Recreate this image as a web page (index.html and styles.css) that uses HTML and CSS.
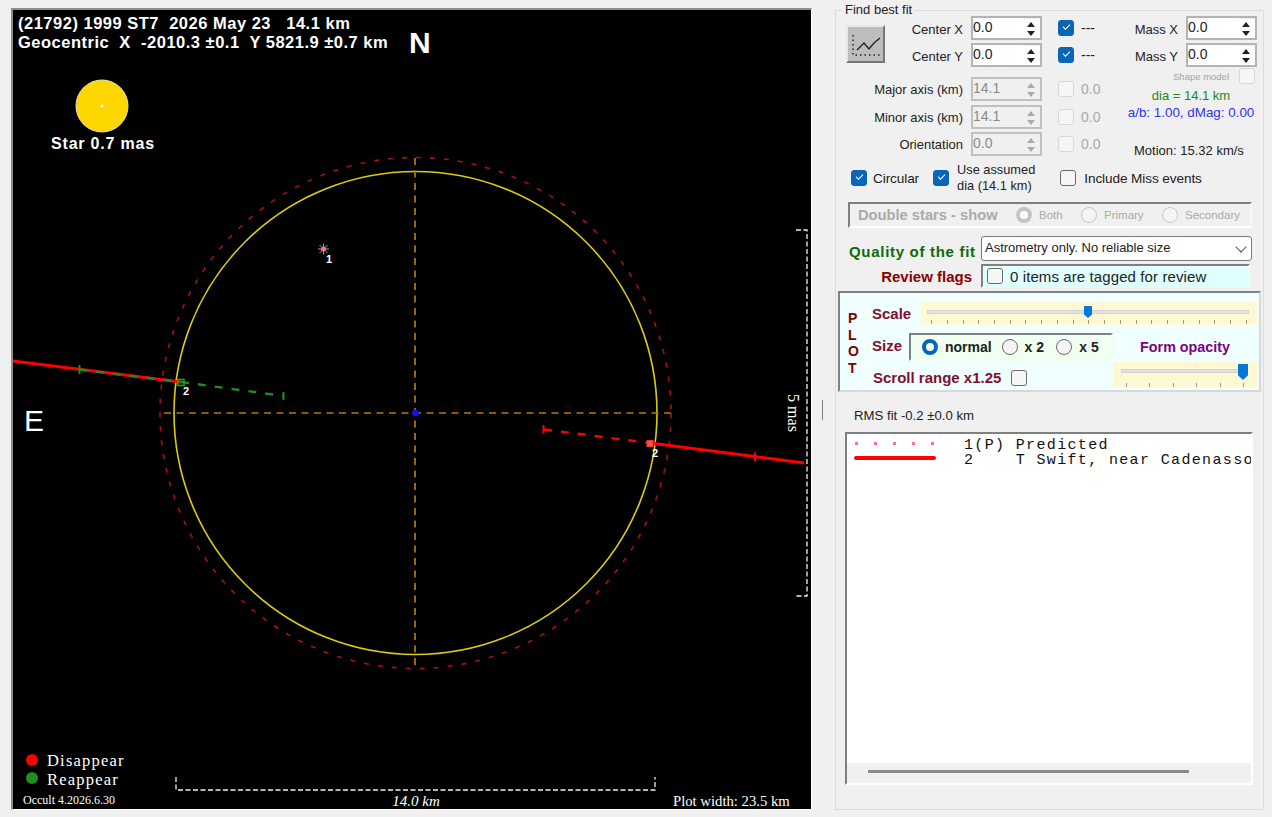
FILE: index.html
```html
<!DOCTYPE html>
<html lang="en">
<head>
    <meta charset="UTF-8">
    <meta name="viewport" content="width=device-width, initial-scale=1.0">
    <title>Asteroid shape fit</title>
    <link rel="stylesheet" href="styles.css">
</head>
<body>
    <main class="window">
        <div class="plot">
            <svg class="plot-svg" viewBox="13 10 798 799" width="798" height="799">
                <text class="head" x="18" y="29">(21792) 1999 ST7  2026 May 23   14.1 km</text>
                <text class="head" x="18" y="48">Geocentric  X  -2010.3 ±0.1  Y 5821.9 ±0.7 km</text>
                <text class="compass bold" x="409" y="53">N</text>
                <text class="compass" x="24" y="431">E</text>

                <circle cx="102" cy="106" r="26" class="star-disc"/>
                <circle cx="102" cy="106" r="1.5" fill="#fff"/>
                <text class="star-label" x="103" y="149" text-anchor="middle">Star 0.7 mas</text>

                <circle cx="415.5" cy="413" r="255.5" class="limit"/>
                <circle cx="415.5" cy="413" r="241.5" class="outline"/>
                <line x1="164" y1="413" x2="671" y2="413" class="axis"/>
                <line x1="415" y1="158" x2="415" y2="668" class="axis"/>
                <circle cx="415.5" cy="413" r="3.5" fill="#1414d8"/>

                <!-- predicted -->
                <g class="spokes">
                    <line x1="318" y1="249" x2="329" y2="249"/>
                    <line x1="323.5" y1="243.5" x2="323.5" y2="254.5"/>
                    <line x1="319.5" y1="245" x2="327.5" y2="253"/>
                    <line x1="319.5" y1="253" x2="327.5" y2="245"/>
                </g>
                <circle cx="323.5" cy="249" r="2.5" fill="#ff69b4"/>
                <text class="tag" x="326" y="263">1</text>

                <!-- T Swift chord -->
                <line x1="13" y1="361" x2="181" y2="382" class="chord"/>
                <line x1="79" y1="369.5" x2="181" y2="382" class="gap-green"/>
                <line x1="181" y1="382" x2="284" y2="396" class="gap-green"/>
                <line x1="79.500" y1="365" x2="79.500" y2="374" class="tick-green"/>
                <line x1="283.500" y1="392" x2="283.500" y2="400" class="tick-green"/>
                <rect x="178" y="379.500" width="6" height="6" class="sq-green"/>
                <text class="tag" x="183" y="395">2</text>

                <line x1="650" y1="443" x2="804" y2="463" class="chord"/>
                <line x1="544" y1="429.500" x2="650" y2="443" class="gap-red"/>
                <line x1="755" y1="452.500" x2="755" y2="461" class="tick-red"/>
                <line x1="543.500" y1="425" x2="543.500" y2="433.500" class="tick-red"/>
                <rect x="647" y="440.500" width="6" height="6" class="sq-red"/>
                <text class="tag" x="652" y="457">2</text>

                <!-- scale bars -->
                <polyline points="176,777 176,790 655,790 655,777" class="bar"/>
                <polyline points="796,230 807,230 807,596 796,596" class="bar"/>
                <text class="serif km" x="416" y="806" text-anchor="middle">14.0 km</text>
                <text class="serif mas" transform="translate(788 413) rotate(90)" text-anchor="middle">5 mas</text>

                <circle cx="32" cy="760" r="6" fill="#ff0000"/>
                <circle cx="32" cy="778" r="6" fill="#1f8f1f"/>
                <text class="serif legend" x="47" y="765.500">Disappear</text>
                <text class="serif legend" x="47" y="784.500">Reappear</text>
                <text class="serif small" x="23" y="804">Occult 4.2026.6.30</text>
                <text class="serif width" x="673" y="806">Plot width: 23.5 km</text>
            </svg>
        </div>

        <div class="splitter"><span></span></div>

        <fieldset class="fit">
            <legend>Find best fit</legend>

            <div class="fit-top">
                <div class="fit-grid">
                    <button class="fit-btn" type="button">
                        <svg viewBox="2 2 35 34" width="35" height="34">
                            <polyline points="7,10 7,30 34,30" class="btn-dots"/>
                            <polyline points="11,25 18,18 23,24 28,18 34,13" class="btn-line"/>
                        </svg>
                    </button>
                    <label class="lbl lbl-c">Center X</label>
                    <div class="spin"><span>0.0</span><i class="arrows"></i></div>
                    <span class="chk on"></span>
                    <span class="val">---</span>

                    <label class="lbl lbl-c">Center Y</label>
                    <div class="spin"><span>0.0</span><i class="arrows"></i></div>
                    <span class="chk on"></span>
                    <span class="val">---</span>

                    <label class="lbl lbl-w">Major axis (km)</label>
                    <div class="spin off"><span>14.1</span><i class="arrows"></i></div>
                    <span class="chk dis"></span>
                    <span class="val dim">0.0</span>

                    <label class="lbl lbl-w">Minor axis (km)</label>
                    <div class="spin off"><span>14.1</span><i class="arrows"></i></div>
                    <span class="chk dis"></span>
                    <span class="val dim">0.0</span>

                    <label class="lbl lbl-w">Orientation</label>
                    <div class="spin off"><span>0.0</span><i class="arrows"></i></div>
                    <span class="chk dis"></span>
                    <span class="val dim">0.0</span>
                </div>

                <div class="fit-side">
                    <div class="mass"><label>Mass X</label><div class="spin"><span>0.0</span><i class="arrows"></i></div></div>
                    <div class="mass"><label>Mass Y</label><div class="spin"><span>0.0</span><i class="arrows"></i></div></div>
                    <div class="shape"><span>Shape model</span><span class="chk dis"></span></div>
                    <p class="dia">dia = 14.1 km</p>
                    <p class="ab">a/b: 1.00, dMag: 0.00</p>
                    <p class="motion">Motion: 15.32 km/s</p>
                </div>
            </div>

            <div class="opts">
                <span class="chk on"></span><span class="opt-circ">Circular</span>
                <span class="chk on"></span><span class="opt-use">Use assumed<br>dia (14.1 km)</span>
                <span class="chk"></span><span class="opt-miss">Include Miss events</span>
            </div>

            <div class="doubles sunken">
                <b>Double stars - show</b>
                <span class="radio dis sel"></span><span class="d-both">Both</span>
                <span class="radio dis"></span><span class="d-prim">Primary</span>
                <span class="radio dis"></span><span>Secondary</span>
            </div>

            <div class="quality">
                <b>Quality of the fit</b>
                <div class="combo">Astrometry only. No reliable size<i></i></div>
            </div>
            <div class="review">
                <b>Review flags</b>
                <div class="review-box sunken"><span class="chk"></span>0 items are tagged for review</div>
            </div>

            <section class="plot-opts sunken">
                <div class="letters">P<br>L<br>O<br>T</div>
                <div class="plot-main">
                    <div class="scale-row">
                        <b class="red scale-lbl">Scale</b>
                        <div class="slider scale"><i class="track"></i><i class="thumb"></i></div>
                    </div>
                    <div class="lower">
                        <div class="lower-left">
                            <div class="size-row">
                                <b class="red size-lbl">Size</b>
                                <div class="size-box sunken">
                                    <span class="radio sel"></span><b>normal</b>
                                    <span class="radio"></span><b>x 2</b>
                                    <span class="radio"></span><b>x 5</b>
                                </div>
                            </div>
                            <div class="scroll-row"><b class="red">Scroll range x1.25</b><span class="chk"></span></div>
                        </div>
                        <div class="lower-right">
                            <b class="opacity">Form opacity</b>
                            <div class="slider fade"><i class="track"></i><i class="thumb"></i></div>
                        </div>
                    </div>
                </div>
            </section>

            <p class="rms">RMS fit -0.2 ±0.0 km</p>

            <div class="listbox sunken">
                <div class="rows">
                    <div class="row"><i class="dots"></i><span>1(P) Predicted</span></div>
                    <div class="row"><i class="solid"></i><span>2    T Swift, near Cadenasso</span></div>
                </div>
                <div class="hscroll"><i></i></div>
            </div>
        </fieldset>
    </main>
</body>
</html>
```

FILE: styles.css
```css
*,
*::before,
*::after{
    box-sizing: border-box;
}

html,body{
    margin: 0;
    height: 100%;
    overflow: hidden;
}

body{
    background: #f0f0f0;
    font-family: "Liberation Sans", Arial, sans-serif;
    font-size: 13px;
    color: #222;
}

p{
    margin: 0;
}

i{
    display: block;
}

.window{
    display: flex;
    align-items: flex-start;
    padding: 4px 0 0 11px;
    height: 817px;
}

/* left plot */
.plot{
    flex: 0 0 auto;
    margin-top: 4px;
    width: 801px;
    height: 802px;
    border: 2px solid #8c8c8c;
    border-right: 1px solid #fff;
    border-bottom: 1px solid #fff;
    background: #000;
}

.plot-svg{
    display: block;
}

.plot-svg text{
    fill: #fff;
    white-space: pre;
}

.head{
    font: bold 16.5px "Liberation Sans", Arial, sans-serif;
    letter-spacing: .5px;
}

.compass{
    font: 30px "Liberation Sans", Arial, sans-serif;
}

.compass.bold{
    font-weight: bold;
}

.star-disc{
    fill: #ffd700;
    stroke: #e8dfb0;
}

.star-label{
    font: bold 16px "Liberation Sans", Arial, sans-serif;
    letter-spacing: .8px;
}

.limit,
.outline{
    fill: none;
}

.limit{
    stroke: #a80f1c;
    stroke-width: 1.6;
    stroke-dasharray: 5 9;
}

.outline{
    stroke: #d8cd10;
    stroke-width: 1.6;
}

.axis{
    stroke: #b8780c;
    stroke-width: 1.7;
    stroke-dasharray: 7 5.5;
}

.spokes line{
    stroke: #9a9a9a;
    stroke-width: 1;
}

.tag{
    font: bold 11px "Liberation Sans", Arial, sans-serif;
}

.chord{
    stroke: #ff0000;
    stroke-width: 3;
}

.gap-green{
    stroke: #1f8a1f;
    stroke-width: 2.4;
    stroke-dasharray: 8 9;
}

.gap-red{
    stroke: #ff0000;
    stroke-width: 2.4;
    stroke-dasharray: 8 9;
}

.tick-green{
    stroke: #1f8a1f;
    stroke-width: 2;
}

.tick-red{
    stroke: #ff0000;
    stroke-width: 2;
}

.sq-green{
    fill: none;
    stroke: #12b012;
    stroke-width: 1.5;
}

.sq-red{
    fill: #e05a50;
    stroke: #ff3030;
}

.bar{
    fill: none;
    stroke: #f0f0f0;
    stroke-width: 1.3;
    stroke-dasharray: 5 2.5;
}

.serif{
    font-family: "Liberation Serif", "Times New Roman", serif;
}

.km{
    font-size: 15px;
    font-style: italic;
}

.mas{
    font-size: 16px;
}

.legend{
    font-size: 16.5px;
    letter-spacing: 1.2px;
}

.small{
    font-size: 12px;
}

.width{
    font-size: 14.7px;
}

/* splitter between plot and controls */
.splitter{
    flex: 0 0 23px;
    display: flex;
    justify-content: center;
    align-items: center;
    padding-right: 3px;
    height: 812px;
}

.splitter span{
    width: 1px;
    height: 20px;
    background: #808080;
}

/* right panel */
.fit{
    flex: 0 0 429px;
    margin: 0;
    padding: 0;
    min-width: 0;
    height: 806px;
    border: 1px solid #dcdcdc;
}

.fit legend{
    margin-left: 6px;
    padding: 0 3px;
    font-size: 13px;
    line-height: 12px;
}

.sunken{
    border: 2px solid;
    border-color: #808080 #fff #fff #808080;
}

.fit-top{
    display: flex;
    height: 140px;
}

.fit-grid{
    flex: 0 0 279px;
    display: grid;
    grid-template-columns: 39px 78px 79px 32px 50px;
    grid-template-rows: 27px 34px 28px 27px 24px;
    margin-left: 10px;
}

.fit-grid .spin{
    margin-left: 8px;
}

.fit-grid .chk{
    justify-self: end;
    margin-top: 4px;
}

.fit-btn{
    grid-row: 1 / 3;
    margin: 9px 0 0 0;
    padding: 0;
    width: 39px;
    height: 38px;
    border: 2px solid;
    border-color: #e8e8e8 #777 #777 #e8e8e8;
    background: #bdbdbd;
}

.fit-btn svg{
    display: block;
}

.btn-dots{
    fill: none;
    stroke: #222;
    stroke-width: 1.5;
    stroke-dasharray: 1.5 3;
}

.btn-line{
    fill: none;
    stroke: #222;
    stroke-width: 1.4;
}

.lbl{
    text-align: right;
    white-space: nowrap;
}

.lbl-c{
    line-height: 28px;
}

.lbl-w{
    grid-column: 1 / 3;
    line-height: 26px;
}

.spin{
    display: flex;
    justify-content: space-between;
    width: 71px;
    height: 24px;
    border: 2px solid #b4b4b4;
    background: #fff;
    font-size: 14px;
    line-height: 19px;
}

.spin.off{
    background: #f0f0f0;
    color: #8a8a8a;
    border-color: #c0c0c0;
}

/* up and down arrows of a spin box */
.arrows{
    position: relative;
    width: 17px;
    height: 20px;
    border-top: 1px solid #f0f0f0;
}

.arrows::before,
.arrows::after{
    content: "";
    position: absolute;
    left: 4px;
    border-left: 4px solid transparent;
    border-right: 4px solid transparent;
}

.arrows::before{
    top: 3px;
    border-bottom: 5px solid #222;
}

.arrows::after{
    top: 12px;
    border-top: 5px solid #222;
}

.off .arrows::before{
    border-bottom-color: #aaa;
}

.off .arrows::after{
    border-top-color: #aaa;
}

.val{
    margin-left: 7px;
    line-height: 24px;
    font-size: 14px;
}

.val.dim{
    color: #a8a8a8;
}

.chk{
    flex: 0 0 auto;
    display: inline-block;
    position: relative;
    width: 16px;
    height: 16px;
    border: 1.5px solid #6a6a6a;
    border-radius: 3px;
    background: #f6f6f6;
}

.chk.on{
    border-color: #0a64b8;
    background: #0a64b8;
}

.chk.on::after{
    content: "";
    position: absolute;
    left: 4px;
    top: 3px;
    width: 7px;
    height: 4px;
    border-left: 1px solid #fff;
    border-bottom: 1px solid #fff;
    transform: rotate(-45deg);
}

.chk.dis{
    border-color: #d8d8d8;
}

.fit-side{
    flex: 0 0 132px;
}

.mass{
    display: flex;
    justify-content: flex-end;
    align-items: center;
    gap: 8px;
    height: 24px;
    margin-bottom: 3px;
    white-space: nowrap;
}

.mass label{
    margin-top: 3px;
}

.shape{
    display: flex;
    justify-content: flex-end;
    align-items: center;
    gap: 10px;
    margin: -2px 2px 0 0;
    height: 16px;
    font-size: 9.5px;
    color: #a4a4a4;
    white-space: nowrap;
}

.dia,
.ab{
    text-align: center;
    white-space: nowrap;
}

.dia{
    margin-top: 4px;
    color: #1a8a1a;
}

.ab{
    margin-top: 2px;
    font-size: 13.4px;
    color: #3232f0;
}

.motion{
    margin: 23px 0 0 9px;
    white-space: nowrap;
}

.opts{
    display: flex;
    align-items: center;
    margin: 6px 0 0 15px;
    height: 32px;
    font-size: 13.6px;
    letter-spacing: -.1px;
}

.opt-circ{
    margin: 0 14px 0 6px;
}

.opt-use{
    margin: 0 25px 0 8px;
    font-size: 12.8px;
    line-height: 16px;
    letter-spacing: 0;
}

.opt-miss{
    margin-left: 8px;
}

.doubles{
    display: flex;
    align-items: center;
    margin: 8px 0 0 12px;
    padding-left: 8px;
    width: 404px;
    height: 26px;
    font-size: 11.5px;
    color: #aaa;
    border-right-color: #f8f8f8;
}

.doubles b{
    width: 158px;
    font-size: 14.7px;
}

.radio{
    flex: 0 0 auto;
    display: inline-block;
    position: relative;
    width: 16px;
    height: 16px;
    border: 1px solid #6a6a6a;
    border-radius: 50%;
    background: #f4f4f4;
}

.radio.dis{
    border-color: #c8c8c8;
}

.radio.sel{
    border: 4px solid #0067c0;
    background: #fff;
}

.radio.dis.sel{
    border-color: #c4c4c4;
}

.doubles span:not(.radio){
    margin-left: 7px;
}

.d-both{
    width: 42px;
}

.d-prim{
    width: 58px;
}

.quality{
    display: flex;
    justify-content: space-between;
    align-items: center;
    margin: 8px 11px 0 13px;
    height: 25px;
}

.quality b{
    margin-top: 5px;
    font-size: 15px;
    letter-spacing: .7px;
    white-space: nowrap;
    color: #0b6b0b;
}

.combo{
    position: relative;
    width: 271px;
    height: 25px;
    padding-left: 3px;
    border: 1px solid #7a7a7a;
    border-radius: 3px;
    background: #fff;
    line-height: 22px;
}

.combo i{
    position: absolute;
    right: 6px;
    top: 6px;
    width: 8px;
    height: 8px;
    border-right: 1px solid #555;
    border-bottom: 1px solid #555;
    transform: rotate(45deg);
}

.review{
    display: flex;
    justify-content: flex-end;
    align-items: center;
    margin: 3px 13px 0 0;
    height: 24px;
}

.review b{
    margin-right: 9px;
    font-size: 15px;
    color: #8b0000;
}

.review-box{
    display: flex;
    align-items: center;
    gap: 7px;
    padding-left: 4px;
    width: 269px;
    height: 24px;
    background: #e0ffff;
    font-size: 15px;
    letter-spacing: .1px;
    border-color: #808080 #e0ffff #e0ffff #808080;
}

.plot-opts{
    display: flex;
    margin: 3px 0 0 2px;
    width: 423px;
    height: 101px;
    background: #f0ffff;
    border-color: #808080 #d8d8d8 #d8d8d8 #808080;
}

.letters{
    flex: 0 0 32px;
    padding: 17px 0 0 8px;
    font-size: 14px;
    font-weight: bold;
    line-height: 16.5px;
    color: #800000;
}

.plot-main{
    padding-top: 9px;
}

.red{
    font-size: 15px;
    white-space: nowrap;
    color: #80102e;
}

.scale-row{
    display: flex;
    align-items: center;
}

.scale-lbl{
    width: 49px;
}

.slider{
    position: relative;
    background: #fff8d2;
}

.track{
    position: absolute;
    height: 4px;
    background: #e2e2e2;
    border: 1px solid #d2d2d2;
}

.thumb{
    position: absolute;
    background: #0078d7;
    clip-path: polygon(0 0, 100% 0, 100% 70%, 50% 100%, 0 70%);
}

.slider::after{
    content: "";
    position: absolute;
    bottom: 1px;
    height: 4px;
}

.scale{
    width: 336px;
    height: 23px;
}

.scale .track{
    left: 6px;
    right: 8px;
    top: 8px;
}

.scale .thumb{
    left: 163px;
    top: 4px;
    width: 8px;
    height: 12px;
}

.scale::after{
    left: 10px;
    width: 317px;
    background: repeating-linear-gradient(to right, #999 0 1px, transparent 1px 15.75px);
}

.fade{
    width: 144px;
    height: 26px;
}

.fade .track{
    left: 8px;
    right: 11px;
    top: 7px;
}

.fade .thumb{
    left: 125px;
    top: 2px;
    width: 10px;
    height: 16px;
}

.fade::after{
    left: 13px;
    width: 119px;
    background: repeating-linear-gradient(to right, #999 0 1px, transparent 1px 23.4px);
}

.lower{
    display: flex;
    margin-top: 8px;
}

.lower-left{
    width: 241px;
}

.size-row{
    display: flex;
    align-items: center;
}

.size-lbl{
    width: 37px;
    margin-top: -3px;
}

.size-box{
    display: flex;
    align-items: center;
    width: 204px;
    height: 28px;
    padding-left: 11px;
    background: #f0fff0;
    font-size: 14px;
    color: #222;
    border-color: #808080 #f0fff0 #f0fff0 #808080;
}

.size-box b{
    margin-left: 7px;
    width: 57px;
}

.size-box b:nth-of-type(n+2){
    width: 32px;
}

.scroll-row{
    display: flex;
    align-items: center;
    gap: 10px;
    margin: 8px 0 0 1px;
    height: 17px;
}

.lower-right{
    width: 144px;
}

.opacity{
    display: block;
    height: 29px;
    padding-top: 6px;
    font-size: 14.3px;
    text-align: center;
    color: #800080;
}

.rms{
    margin: 16px 0 0 18px;
    height: 16px;
    font-size: 13.2px;
    line-height: 16px;
}

.listbox{
    margin: 8px 0 0 9px;
    display: flex;
    flex-direction: column;
    width: 408px;
    height: 353px;
    border-color: #808080 #fff #fff #808080;
}

.rows{
    flex: 1;
    padding-top: 4px;
    background: #fff;
    overflow: hidden;
}

.row{
    display: flex;
    align-items: center;
    height: 15px;
    white-space: pre;
    font: 15px/15px "Liberation Mono", "Courier New", monospace;
    letter-spacing: 1.35px;
    color: #111;
}

.row span{
    margin-left: 28px;
}

.dots,
.solid{
    flex: 0 0 82px;
    margin-left: 7px;
}

.dots{
    margin-top: -4px;
    height: 5px;
    background: radial-gradient(circle at 2.5px 2.5px, #ff69b4 1.5px, transparent 2px) 0 0 / 19px 5px repeat-x;
}

.solid{
    margin-top: -6px;
    height: 4px;
    background: #ff0000;
    border-radius: 2px;
}

.hscroll{
    flex: 0 0 20px;
    padding: 7px 0 0 21px;
}

.hscroll i{
    width: 321px;
    height: 3px;
    background: #8a8a8a;
}
```
